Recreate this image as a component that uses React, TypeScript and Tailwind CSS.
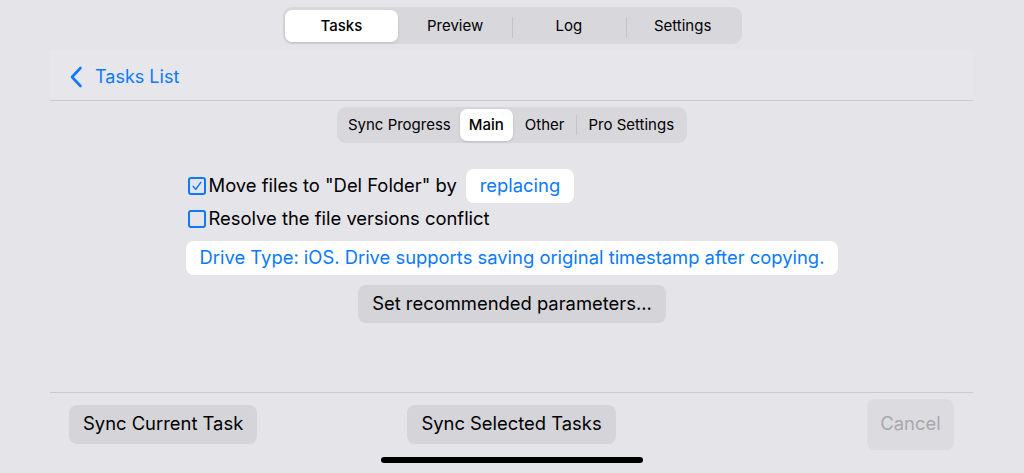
import React from "react";

const font = { fontFamily: 'Inter, "Noto Sans", sans-serif' };

function Checkbox({ checked }: { checked?: boolean }) {
  return (
    <span className="flex h-[18px] w-[18px] items-center justify-center rounded-[3px] border-2 border-[#0a7aff]">
      {checked && (
        <svg width="12" height="12" viewBox="0 0 12 12" fill="none">
          <path d="M2.2 6.4 L4.8 9.2 L9.8 2.4" stroke="#0a7aff" strokeWidth="1.5" strokeLinecap="round" strokeLinejoin="round" />
        </svg>
      )}
    </span>
  );
}

export default function App() {
  const tabs = ["Tasks", "Preview", "Log", "Settings"];
  return (
    <div style={font} className="flex h-[473px] w-[1024px] flex-col overflow-hidden bg-[#e5e4e9] text-black">
      {/* top segmented control */}
      <div className="flex justify-center pt-[7px]">
        <div className="flex h-[37px] w-[459px] rounded-[9px] bg-[#d8d7dc] p-[2px]">
          {tabs.map((t, i) => (
            <div key={t} className="relative flex flex-1 items-center justify-center pt-px">
              {i === 0 ? (
                <div className="flex h-full w-full items-center justify-center rounded-[7px] bg-white text-[15px] font-medium shadow-[0_1px_3px_rgba(0,0,0,0.12)]">
                  {t}
                </div>
              ) : (
                <span className="text-[15px]">{t}</span>
              )}
              {i > 1 && <span className="absolute left-0 top-[8px] h-[21px] w-px bg-[#c4c3c8]" />}
            </div>
          ))}
        </div>
      </div>

      {/* nav bar */}
      <div className="ml-[50px] mr-[51px] mt-[6px] flex h-[51px] items-center border-b border-[#cbcacf] bg-[#e7e6eb] pl-[19px] pt-[3px]">
        <svg width="14" height="22" viewBox="0 0 14 22" fill="none">
          <path d="M11.5 2 L3 11 L11.5 20" stroke="#0a7aff" strokeWidth="2.6" strokeLinecap="round" strokeLinejoin="round" />
        </svg>
        <span className="ml-[12px] text-[18px] text-[#0a7aff]">Tasks List</span>
      </div>

      {/* sub segmented control */}
      <div className="mt-[6px] flex justify-center">
        <div className="flex h-[36px] items-center rounded-[9px] bg-[#d8d7dc] px-[2px]">
          <div className="flex h-[32px] items-center px-[9px] text-[15px]">Sync Progress</div>
          <div className="flex h-[32px] items-center rounded-[7px] bg-white px-[9px] text-[15px] font-medium shadow-[0_1px_3px_rgba(0,0,0,0.12)]">Main</div>
          <div className="flex h-[32px] items-center px-[12px] text-[15px]">Other</div>
          <span className="h-[20px] w-px bg-[#c4c3c8]" />
          <div className="flex h-[32px] items-center px-[11px] text-[15px]">Pro Settings</div>
        </div>
      </div>

      {/* options */}
      <div className="mx-auto mt-[26px] flex w-fit flex-col items-start">
        <div className="flex h-[34px] items-center pl-[2px]">
          <Checkbox checked />
          <span className="ml-[3px] text-[18.4px]">Move files to "Del Folder" by</span>
          <span className="ml-[9px] flex h-[34px] items-center rounded-[8px] bg-white px-[14px] text-[18.4px] text-[#0a7aff]">replacing</span>
        </div>
        <div className="mt-[3px] flex h-[26px] items-center pl-[2px]">
          <Checkbox />
          <span className="ml-[3px] text-[18.4px]">Resolve the file versions conflict</span>
        </div>
        <div className="mt-[9px] flex h-[34px] items-center rounded-[8px] bg-white px-[14px] text-[18.4px] text-[#0a7aff]">
          Drive Type: iOS. Drive supports saving original timestamp after copying.
        </div>
        <button className="mt-[10px] flex h-[38px] items-center self-center rounded-[8px] bg-[#d5d4d9] px-[14px] text-[18.4px]">
          Set recommended parameters...
        </button>
      </div>

      {/* bottom toolbar */}
      <div className="ml-[50px] mr-[51px] mt-auto border-t border-[#cbcacf]">
        <div className="grid h-[62px] grid-cols-3 items-center px-[19px]">
          <div className="flex justify-start">
            <button className="flex h-[39px] items-center rounded-[8px] bg-[#d5d4d9] px-[14px] text-[18.4px]">Sync Current Task</button>
          </div>
          <div className="flex justify-center">
            <button className="flex h-[39px] items-center rounded-[8px] bg-[#d5d4d9] px-[14px] text-[18.4px]">Sync Selected Tasks</button>
          </div>
          <div className="flex justify-end">
            <button className="flex h-[51px] w-[87px] items-center justify-center rounded-[8px] bg-[#dcdbe0] text-[18.4px] text-[#a9a8ad]">Cancel</button>
          </div>
        </div>
      </div>
      <div className="mx-auto mb-[10px] mt-[2px] h-[6px] w-[262px] rounded-full bg-black" />
    </div>
  );
}
